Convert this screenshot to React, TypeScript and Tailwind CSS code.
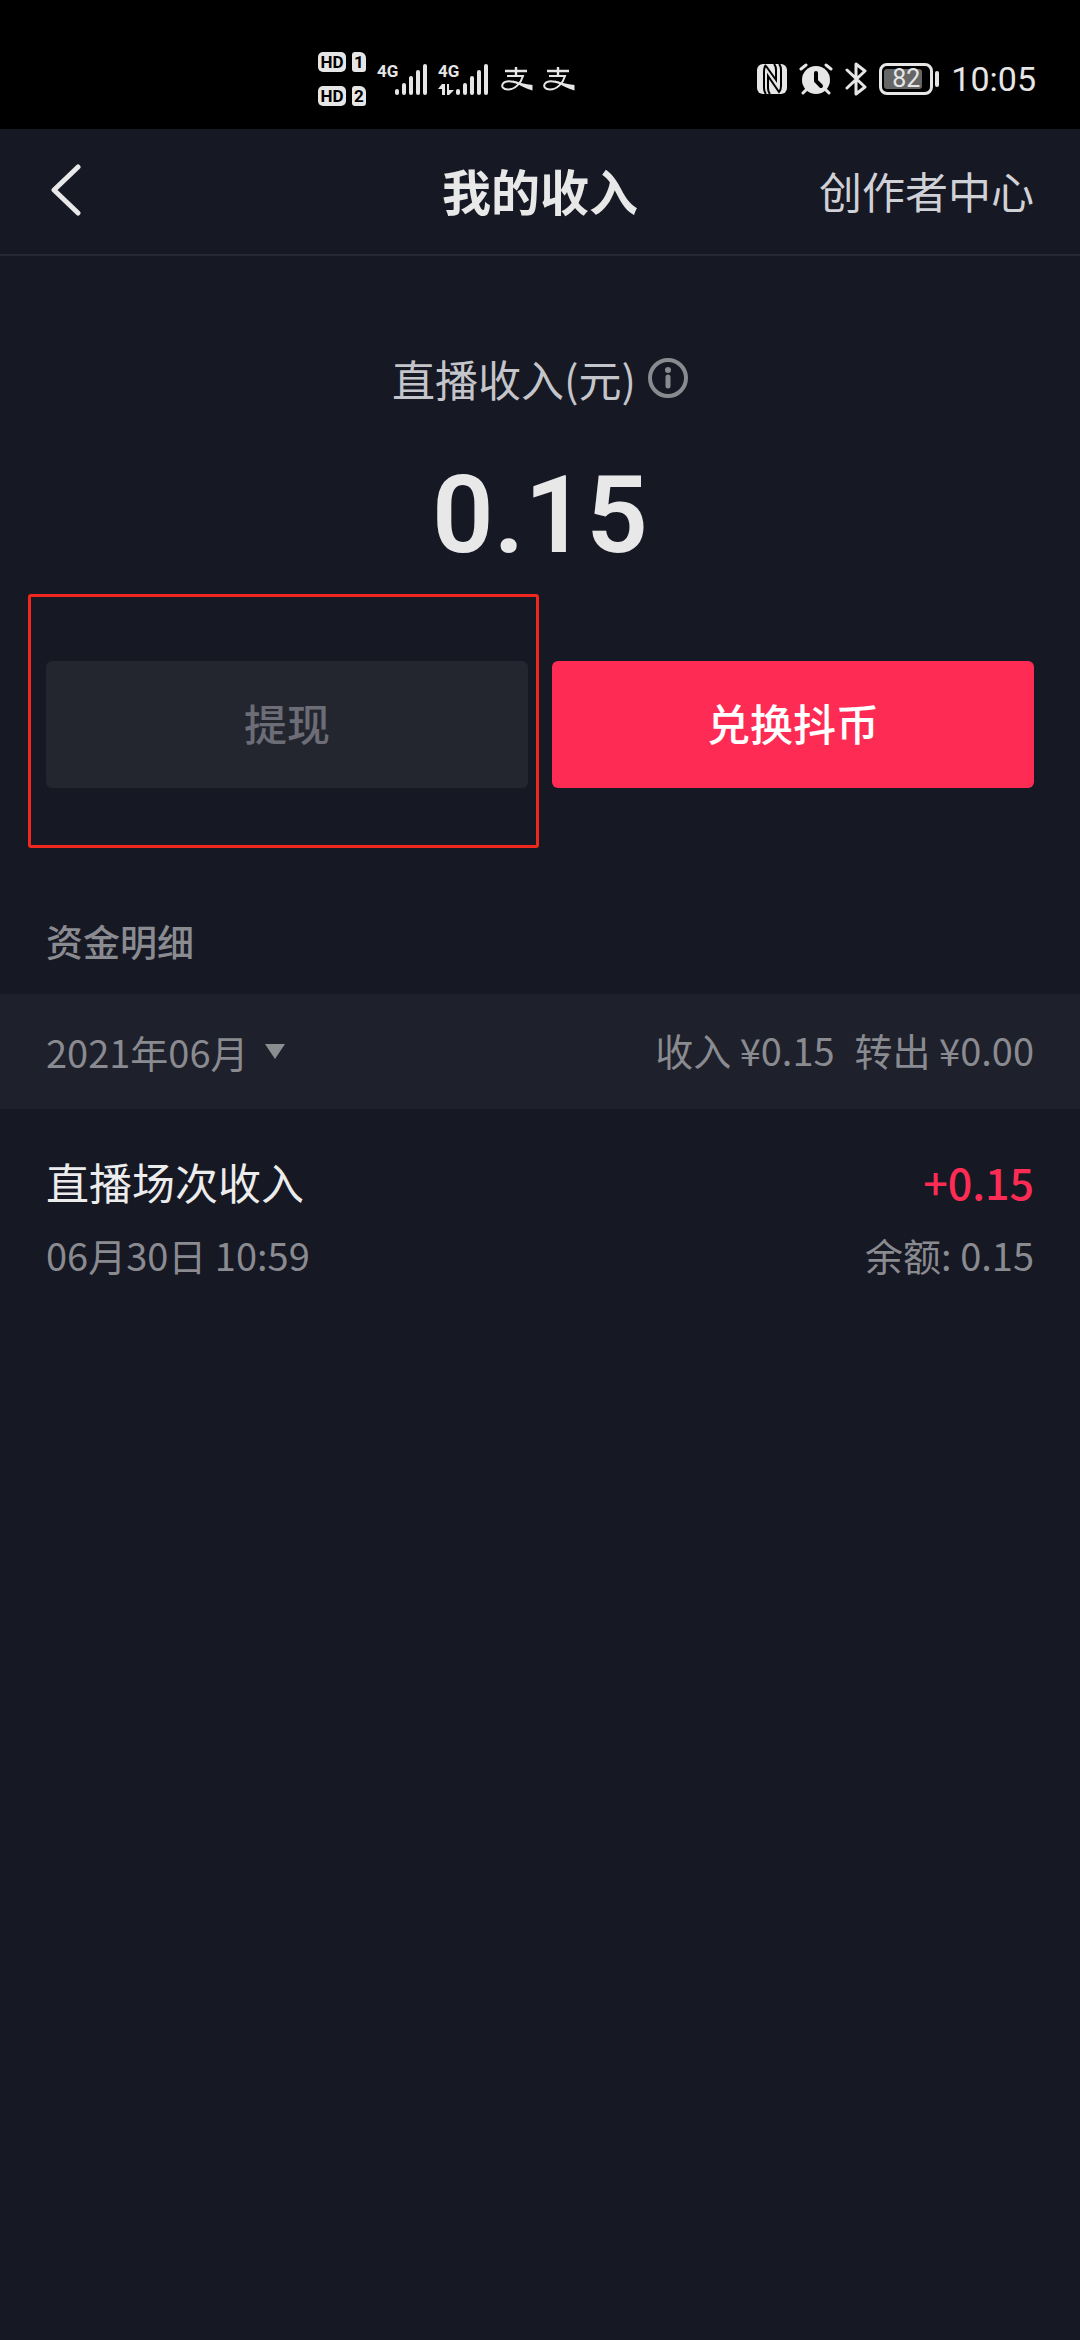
import React from 'react';

interface SignalProps {
  active?: boolean;
}

interface RecordRowProps {
  title: string;
  time: string;
  amount: string;
  balance: string;
}

const records: RecordRowProps[] = [
  { title: '直播场次收入', time: '06月30日 10:59', amount: '+0.15', balance: '余额: 0.15' },
];

const SimBadge: React.FC<{ slot: string }> = ({ slot }) => (
  <div className="flex items-center gap-1.5 font-bold text-black">
    <span className="flex h-5 w-7 items-center justify-center rounded-[5px] bg-[#e6e6e6] text-[17px] leading-5">
      HD
    </span>
    <span className="flex h-5 w-3.5 items-center justify-center rounded-[3px] rounded-tr-[6px] bg-[#e6e6e6] text-[17px] leading-5">
      {slot}
    </span>
  </div>
);

const Signal: React.FC<SignalProps> = ({ active }) => (
  <div className="flex h-8 items-end">
    <div className="flex h-8 w-[18px] flex-col justify-between">
      <span className="text-[17px] font-bold leading-4">4G</span>
      {active && (
        <svg viewBox="0 0 16 11" className="h-[11px] w-4" fill="currentColor">
          <path d="M4 0h3v11H4V5H0zM9 0h2v6h5l-5 5H9z" />
        </svg>
      )}
    </div>
    <svg viewBox="0 0 33 31" className="h-[31px] w-[33px]" fill="currentColor">
      <rect x="0" y="25" width="4" height="6" rx="2" />
      <rect x="7" y="19" width="4" height="12" rx="2" />
      <rect x="14" y="12" width="4" height="19" rx="2" />
      <rect x="21" y="6" width="4" height="25" rx="2" />
      <rect x="28" y="0" width="4" height="31" rx="2" />
    </svg>
  </div>
);

const PayIcon: React.FC = () => (
  <svg viewBox="0 0 32 24" className="h-6 w-8" fill="none" stroke="currentColor" strokeWidth="2">
    <path d="M4 4h22M15 0v9" strokeWidth="2.4" />
    <path d="M6 9h16c-2 7-8 13.500-15 13.500-5 0-7-3-5-6 3-4 9-2.500 15-.5" />
    <path d="M12 13.500c6 2 12 3.500 19.500 4.500v5.500c-6-2-12-4.500-19.500-9z" fill="currentColor" stroke="none" />
  </svg>
);

const StatusBar: React.FC = () => (
  <div className="flex h-[129px] items-center justify-between bg-black pl-[318px] pr-11 pt-7 font-[Roboto,sans-serif] text-[#e6e6e6]">
    <div className="flex items-center">
      <div className="mr-[11px] flex flex-col gap-3.5">
        <SimBadge slot="1" />
        <SimBadge slot="2" />
      </div>
      <div className="mr-3 flex gap-2.5">
        <Signal />
        <Signal active />
      </div>
      <div className="flex gap-2.5">
        <PayIcon />
        <PayIcon />
      </div>
    </div>
    <div className="flex items-center gap-3">
      {/* NFC */}
      <svg viewBox="0 0 30 30" className="h-[30px] w-[30px]">
        <rect width="30" height="30" rx="6" fill="#e6e6e6" />
        <path
          d="M9 1Q7 3 7 8v16q0 4 2 6M9 2l10 14V6q0-4-2-6M13 30q-2-2-2-6V12l11 16q2-2 2-6V6q0-4-2-6"
          fill="none"
          stroke="#000"
          strokeWidth="2"
        />
      </svg>
      {/* Alarm */}
      <svg viewBox="0 0 34 32" className="h-8 w-[34px]" fill="none" stroke="#e6e6e6" strokeWidth="3" strokeLinecap="round">
        <circle cx="17" cy="17" r="14" fill="#e6e6e6" stroke="none" />
        <path d="M2 6l5-4M32 6l-5-4M7 27l-3 3M27 27l3 3" />
        <path d="M17 10v8l5 5" stroke="#000" strokeWidth="4" />
      </svg>
      {/* Bluetooth */}
      <svg viewBox="0 0 22 34" className="h-[34px] w-[22px]" fill="none" stroke="#e6e6e6" strokeWidth="3" strokeLinecap="round" strokeLinejoin="round">
        <path d="M2 8l18 17-9 7V2l9 7L2 26" />
      </svg>
      {/* Battery */}
      <div className="flex items-center gap-0.5">
        <div className="flex h-8 w-[54px] items-center rounded-[8px] border-3 border-[#e6e6e6] px-0.5">
          <span className="flex h-5 w-[38px] items-center justify-center rounded-[3px] bg-[#666] pl-1.5 text-[25px] leading-5">
            82
          </span>
        </div>
        <span className="h-4 w-1 rounded-full bg-[#e6e6e6]" />
      </div>
      <time className="text-[34px] leading-8">10:05</time>
    </div>
  </div>
);

const RecordRow: React.FC<RecordRowProps> = ({ title, time, amount, balance }) => (
  <li>
    <div className="flex items-center justify-between text-[43px] leading-[60px]">
      <span className="text-[#ececed]">{title}</span>
      <span className="font-medium text-[#fe2c55]">{amount}</span>
    </div>
    <div className="mt-[18px] flex items-center justify-between text-[38px] leading-[52px] text-[#8a8b91]">
      <span>{time}</span>
      <span>{balance}</span>
    </div>
  </li>
);

const App: React.FC = () => {
  return (
    <div className="min-h-screen bg-[#161823] font-['Noto_Sans_CJK_SC',sans-serif]">
      <StatusBar />

      {/* Header */}
      <header className="grid h-[127px] grid-cols-[1fr_auto_1fr] items-center border-b-2 border-[#252731] px-[46px] pb-1">
        <button type="button" aria-label="返回" className="justify-self-start pl-1">
          <svg viewBox="0 0 32 52" className="h-[52px] w-8" fill="none" stroke="#e8e8e9" strokeWidth="5" strokeLinecap="round" strokeLinejoin="round">
            <path d="M28 3L4 26l24 23" />
          </svg>
        </button>
        <h1 className="text-[49px] font-bold leading-[60px] text-[#e8e8e9]">我的收入</h1>
        <a href="#creator" className="justify-self-end text-[43px] leading-[60px] text-[#d0d1d6]">
          创作者中心
        </a>
      </header>

      <main>
        {/* Balance */}
        <section className="px-[46px] pt-[92px] text-center">
          <div className="flex items-center justify-center gap-3">
            <h2 className="text-[43px] leading-[60px] text-[#c4c5ca]">直播收入(元)</h2>
            <button type="button" aria-label="收入说明">
              <svg viewBox="0 0 40 40" className="h-10 w-10" fill="none" stroke="#8a8b91">
                <circle cx="20" cy="20" r="18" strokeWidth="4" />
                <path d="M20 19v9" strokeWidth="5" strokeLinecap="round" />
                <circle cx="20" cy="12" r="3" fill="#8a8b91" stroke="none" />
              </svg>
            </button>
          </div>
          <p className="mt-[51px] font-[Roboto,sans-serif] text-[108px] font-semibold leading-[112px] text-[#e8e8e9]">0.15</p>

          <div className="mt-[90px] grid grid-cols-2 gap-6 text-[43px] font-medium leading-[60px]">
            <div className="relative">
              <button type="button" disabled className="block h-[127px] w-full rounded-md bg-[#24262f] pb-1.5 text-[#6c6d76]">
                提现
              </button>
              <div className="pointer-events-none absolute -bottom-[60px] -left-[18px] -right-[11px] -top-[67px] rounded-[3px] border-3 border-[#f0271d]" />
            </div>
            <button type="button" className="block h-[127px] w-full rounded-md bg-[#fe2c55] pb-1.5 text-white">
              兑换抖币
            </button>
          </div>
        </section>

        {/* Records */}
        <section className="mt-[127px]">
          <h2 className="px-[46px] text-[37px] font-medium leading-[52px] text-[#8a8b91]">资金明细</h2>
          <div className="mt-[27px] flex h-[115px] items-center justify-between bg-[#1e202b] px-[46px] text-[38px] leading-[52px] text-[#8a8b91]">
            <label className="flex items-center gap-4">
              <select aria-label="月份" className="appearance-none bg-transparent">
                <option>2021年06月</option>
              </select>
              <svg viewBox="0 0 20 15" className="h-[15px] w-5" fill="#8c8d90">
                <path d="M0 0h20L10 15z" />
              </svg>
            </label>
            <p className="flex gap-5 pb-1">
              <span>收入 ¥0.15</span>
              <span>转出 ¥0.00</span>
            </p>
          </div>
          <ul className="px-[46px] pt-[42px]">
            {records.map((record) => (
              <RecordRow key={record.time} {...record} />
            ))}
          </ul>
        </section>
      </main>
    </div>
  );
};

export default App;
